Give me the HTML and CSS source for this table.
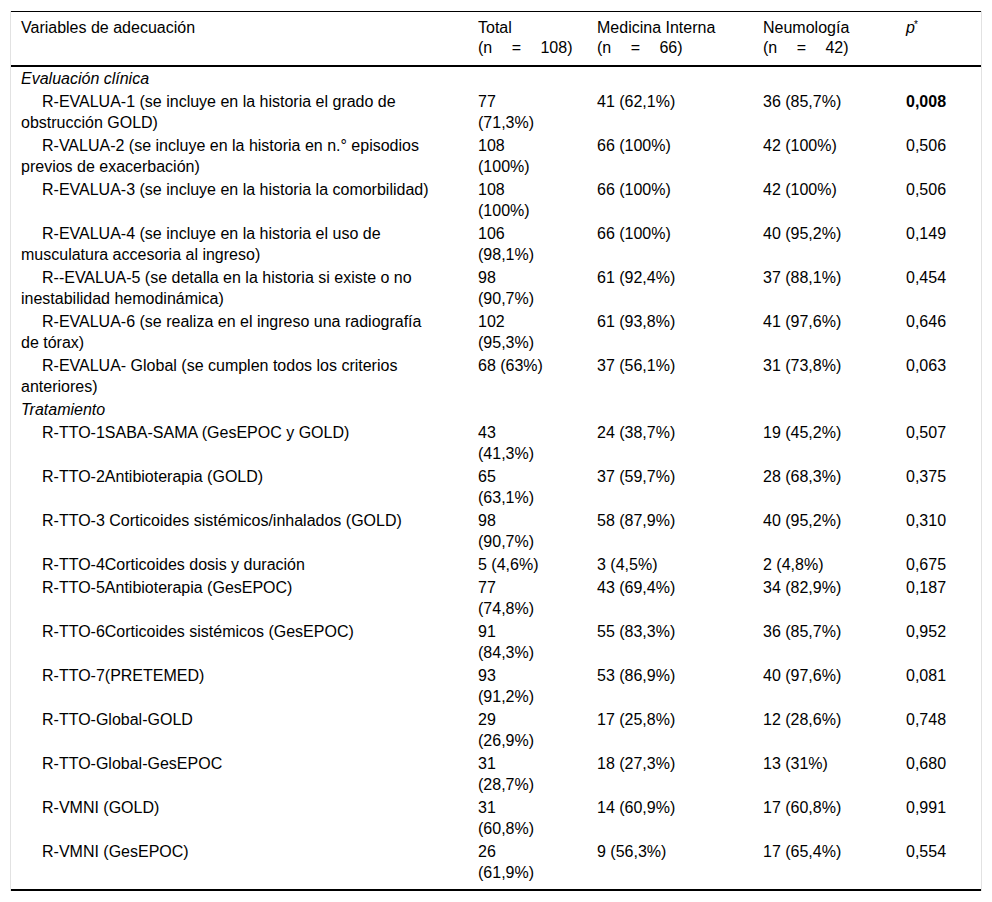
FILE: index.html
```html
<!DOCTYPE html>
<html lang="es">
<head>
<meta charset="utf-8">
<title>Variables de adecuación</title>
<link rel="stylesheet" href="styles.css">
</head>
<body>
<div class="wrap">
<table class="data">
<colgroup>
<col class="c1"><col class="c2"><col class="c3"><col class="c4"><col class="c5">
</colgroup>
<thead>
<tr>
<th>Variables de adecuación</th>
<th class="tot">Total<br><span class="n">(n = 108)</span></th>
<th>Medicina Interna<br><span class="n">(n = 66)</span></th>
<th>Neumología<br><span class="n">(n = 42)</span></th>
<th><i>p</i><sup>*</sup></th>
</tr>
</thead>
<tbody>
<tr class="sec"><td><i>Evaluación clínica</i></td><td class="tot"></td><td></td><td></td><td></td></tr>
<tr><td class="ind">R-EVALUA-1 (se incluye en la historia el grado de obstrucción GOLD)</td><td class="tot">77 (71,3%)</td><td>41 (62,1%)</td><td>36 (85,7%)</td><td><b>0,008</b></td></tr>
<tr><td class="ind">R-VALUA-2 (se incluye en la historia en n.° episodios previos de exacerbación)</td><td class="tot">108 (100%)</td><td>66 (100%)</td><td>42 (100%)</td><td>0,506</td></tr>
<tr><td class="ind">R-EVALUA-3 (se incluye en la historia la comorbilidad)</td><td class="tot">108 (100%)</td><td>66 (100%)</td><td>42 (100%)</td><td>0,506</td></tr>
<tr><td class="ind">R-EVALUA-4 (se incluye en la historia el uso de musculatura accesoria al ingreso)</td><td class="tot">106 (98,1%)</td><td>66 (100%)</td><td>40 (95,2%)</td><td>0,149</td></tr>
<tr><td class="ind">R--EVALUA-5 (se detalla en la historia si existe o no inestabilidad hemodinámica)</td><td class="tot">98 (90,7%)</td><td>61 (92,4%)</td><td>37 (88,1%)</td><td>0,454</td></tr>
<tr><td class="ind">R-EVALUA-6 (se realiza en el ingreso una radiografía de tórax)</td><td class="tot">102 (95,3%)</td><td>61 (93,8%)</td><td>41 (97,6%)</td><td>0,646</td></tr>
<tr><td class="ind">R-EVALUA- Global (se cumplen todos los criterios anteriores)</td><td class="tot">68 (63%)</td><td>37 (56,1%)</td><td>31 (73,8%)</td><td>0,063</td></tr>
<tr class="sec"><td><i>Tratamiento</i></td><td class="tot"></td><td></td><td></td><td></td></tr>
<tr><td class="ind">R-TTO-1SABA-SAMA (GesEPOC y GOLD)</td><td class="tot">43 (41,3%)</td><td>24 (38,7%)</td><td>19 (45,2%)</td><td>0,507</td></tr>
<tr><td class="ind">R-TTO-2Antibioterapia (GOLD)</td><td class="tot">65 (63,1%)</td><td>37 (59,7%)</td><td>28 (68,3%)</td><td>0,375</td></tr>
<tr><td class="ind">R-TTO-3 Corticoides sistémicos/inhalados (GOLD)</td><td class="tot">98 (90,7%)</td><td>58 (87,9%)</td><td>40 (95,2%)</td><td>0,310</td></tr>
<tr><td class="ind">R-TTO-4Corticoides dosis y duración</td><td class="tot">5 (4,6%)</td><td>3 (4,5%)</td><td>2 (4,8%)</td><td>0,675</td></tr>
<tr><td class="ind">R-TTO-5Antibioterapia (GesEPOC)</td><td class="tot">77 (74,8%)</td><td>43 (69,4%)</td><td>34 (82,9%)</td><td>0,187</td></tr>
<tr><td class="ind">R-TTO-6Corticoides sistémicos (GesEPOC)</td><td class="tot">91 (84,3%)</td><td>55 (83,3%)</td><td>36 (85,7%)</td><td>0,952</td></tr>
<tr><td class="ind">R-TTO-7(PRETEMED)</td><td class="tot">93 (91,2%)</td><td>53 (86,9%)</td><td>40 (97,6%)</td><td>0,081</td></tr>
<tr><td class="ind">R-TTO-Global-GOLD</td><td class="tot">29 (26,9%)</td><td>17 (25,8%)</td><td>12 (28,6%)</td><td>0,748</td></tr>
<tr><td class="ind">R-TTO-Global-GesEPOC</td><td class="tot">31 (28,7%)</td><td>18 (27,3%)</td><td>13 (31%)</td><td>0,680</td></tr>
<tr><td class="ind">R-VMNI (GOLD)</td><td class="tot">31 (60,8%)</td><td>14 (60,9%)</td><td>17 (60,8%)</td><td>0,991</td></tr>
<tr><td class="ind">R-VMNI (GesEPOC)</td><td class="tot">26 (61,9%)</td><td>9 (56,3%)</td><td>17 (65,4%)</td><td>0,554</td></tr>
</tbody>
</table>
</div>
</body>
</html>
```
FILE: styles.css
```css
html, body {
  margin: 0;
  padding: 0;
  background: #fff;
}
body {
  font-family: "Liberation Sans", Arial, sans-serif;
  font-size: 16px;
  color: #000;
}
.wrap {
  margin: 11px 0 0 10px;
  width: 970px;
  border-left: 1px solid #e2e2e2;
  border-right: 1px solid #e2e2e2;
}
.data {
  width: 970px;
  table-layout: fixed;
  border-collapse: collapse;
  border-top: 1px solid #000;
  border-bottom: 2px solid #000;
}
.c1 { width: 457px; }
.c2 { width: 119px; }
.c3 { width: 166px; }
.c4 { width: 143px; }
.c5 { width: 85px; }
.data th {
  font-weight: normal;
  text-align: left;
  vertical-align: top;
  line-height: 20px;
  padding: 6px 10px 7px 10px;
  border-bottom: 2px solid #000;
}
.data th sup {
  font-size: 10px;
  line-height: 0;
  vertical-align: 5px;
  margin-left: -1px;
}
.n {
  word-spacing: 15px;
  white-space: nowrap;
}
.data td {
  vertical-align: top;
  text-align: left;
  line-height: 21px;
  padding: 1px 10px;
}
.data td.tot {
  padding-right: 36px;
}
.data td.ind {
  text-indent: 21px;
  padding-right: 30px;
}
.data tbody tr:last-child td {
  padding-bottom: 6px;
}
```
